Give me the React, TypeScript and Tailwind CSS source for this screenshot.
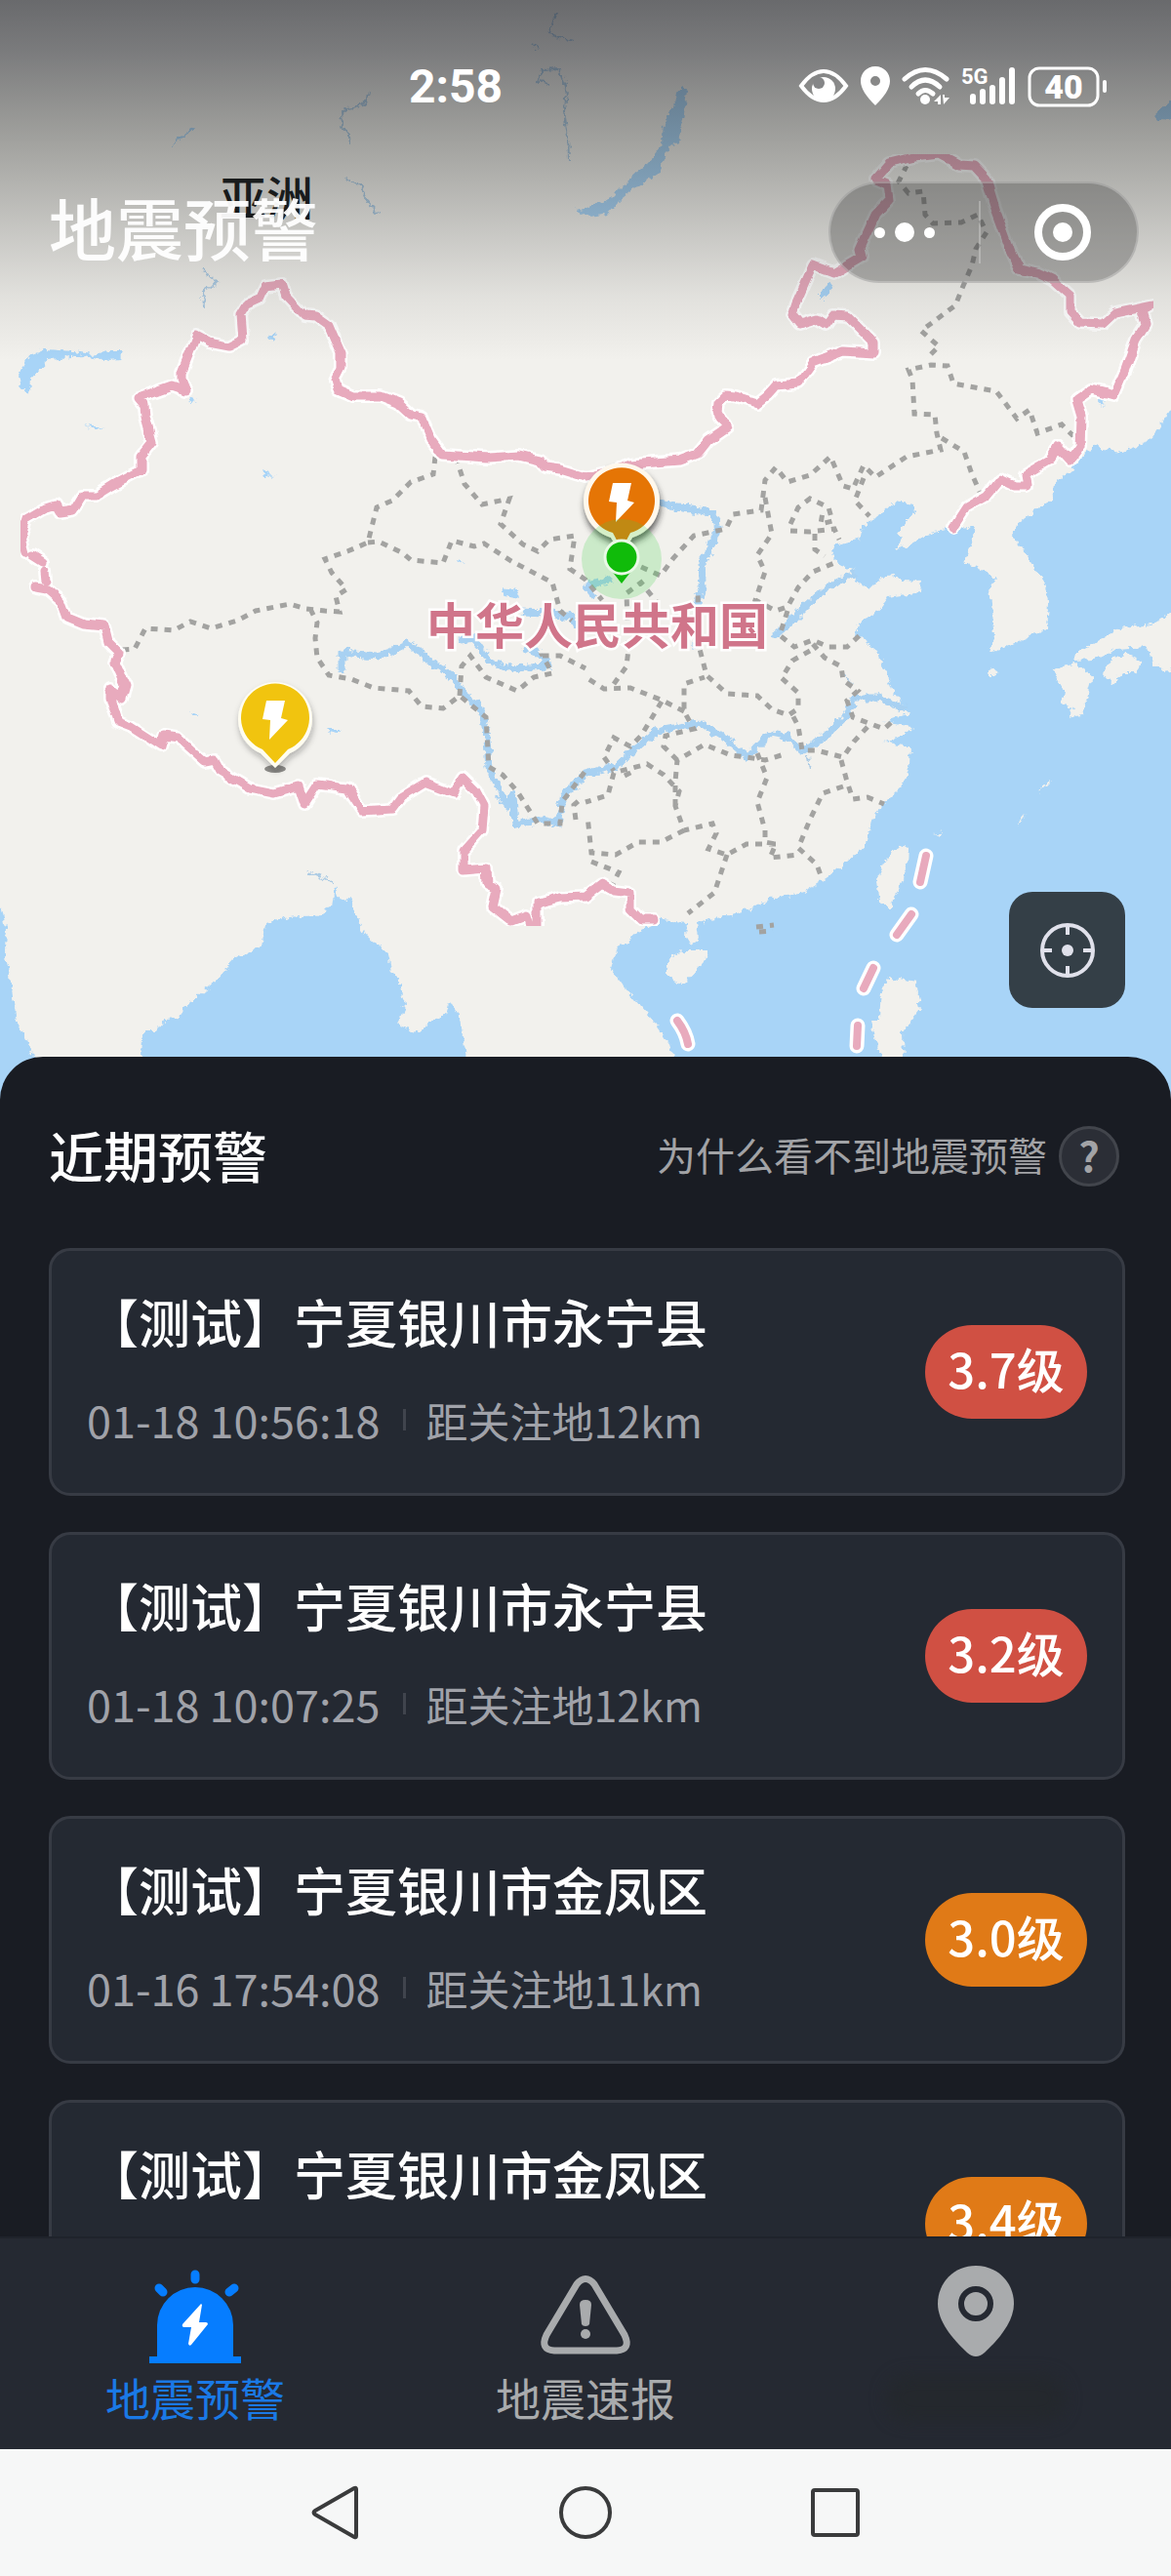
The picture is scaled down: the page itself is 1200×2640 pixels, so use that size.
import { useState } from 'react';

type Alert = {
  id: number;
  place: string;
  time: string;
  distance: string;
  level: string;
  severe: boolean;
};

const ALERTS: Alert[] = [
  { id: 1, place: '【测试】宁夏银川市永宁县', time: '01-18 10:56:18', distance: '距关注地12km', level: '3.7级', severe: true },
  { id: 2, place: '【测试】宁夏银川市永宁县', time: '01-18 10:07:25', distance: '距关注地12km', level: '3.2级', severe: true },
  { id: 3, place: '【测试】宁夏银川市金凤区', time: '01-16 17:54:08', distance: '距关注地11km', level: '3.0级', severe: false },
  { id: 4, place: '【测试】宁夏银川市金凤区', time: '01-16 17:49:31', distance: '距关注地11km', level: '3.4级', severe: false },
];

const SEA = [
  'M1200 420L1182 448L1166 457L1151 463L1130 460L1124 455L1111 465L1097 482L1080 496L1078 513L1065 520L1040 540L1036 547L1052 569L1069 594L1075 619L1073 644L1052 654L1015 669L1019 651L1013 604L1021 594L1006 583L987 576L994 561L998 540L975 541L950 548L934 557L920 563L924 552L919 546L937 525L937 516L918 513L904 526L885 540L882 552L865 556L855 560L852 570L862 580L876 583L877 596L890 604L900 594L912 588L925 595L945 596L942 607L911 612L902 624L880 640L878 652L899 667L907 687L914 706L932 731L906 740L935 745L923 756L905 760L933 765L932 783L925 805L906 824L893 842L888 865L867 884L848 899L823 915L793 920L775 929L750 937L727 943L714 946L716 962L708 968L703 960L704 945L675 943L655 953L646 960L644 967L631 973L626 993L642 1015L671 1048L686 1070L690 1085L690 1150L1220 1150L1220 420Z',
  'M144 1150L144 1083L145 1065L149 1056L161 1056L168 1045L184 1044L188 1033L222 1004L241 983L268 969L273 947L295 940L325 938L340 930L343 908L348 924L360 919L367 944L375 958L398 979L402 997L409 1004L415 1029L409 1051L429 1058L446 1044L457 1040L461 1026L471 1044L478 1083L480 1150Z',
  'M-20 928L2 930L6 950L5 976L10 1001L17 1047L35 1083L60 1150L-20 1150Z',
];

const ISLANDS = [
  'M925 866L931 870L930 885L925 904L915 922L911 933L900 919L898 901L906 884L914 872Z',
  'M726 974L722 986L701 1008L690 1006L682 997L686 981L703 974Z',
  'M910 1001L939 1006L943 1033L925 1058L928 1150L906 1100L893 1047L902 1044L904 1015Z',
  'M1220 629L1200 629L1185 638L1147 644L1120 660L1103 669L1101 677L1120 676L1143 665L1176 663L1182 679L1193 688L1220 683Z',
  'M1101 679L1120 694L1115 712L1109 733L1094 736L1100 726L1088 722L1090 708L1086 701L1078 686Z',
  'M1130 690L1140 675L1155 670L1172 678L1163 690L1150 690L1140 702Z',
  'M1012 689L1019 686L1025 689L1019 693L1013 693Z',
  'M1064 813L1072 802L1078 800L1068 810Z',
  'M1041 845L1052 833L1046 842Z',
  'M958 855L966 853L962 856Z',
];

const LAKES = [
  'M699 88L704 91L701 117L694 146L686 150L673 179L650 193L633 207L623 219L604 222L589 215L604 212L623 205L642 186L663 169L678 148L680 127Z',
  'M19 386L29 365L46 358L76 360L95 363L112 360L126 360L124 368L107 369L85 365L50 368L31 389L30 405L22 396Z',
  'M1220 103L1200 103L1183 117L1188 123L1220 125Z',
  'M850 290L854 291L846 305L840 307L840 300Z',
  'M1123 409L1133 410L1130 417Z',
  'M275 344L284 340L280 350Z',
  'M192 407L202 411L196 413Z',
  'M87 436L108 438L98 440Z',
  'M268 482L281 488L270 487Z',
  'M514 603L530 606L532 614L518 611Z',
  'M335 747L350 747L340 752Z',
  'M174 149L199 130L198 134L182 146Z',
  'M196 730L204 733L199 733Z',
  'M468 574L477 576L471 578Z',
];

const RIVERS = [
  'M350 690L350 669L387 672L400 668L417 660L428 665L440 677L465 694L475 711L490 722L498 745L501 786L519 826L526 815L528 845L555 840L572 844L578 815L600 793L631 786L650 768L677 747L719 742L742 756L765 776L780 760L791 751L805 754L822 770L845 755L868 733L876 715L898 715L929 727',
  'M471 656L486 654L501 677L520 685L563 683L552 670L536 663',
  'M534 627L562 628L586 632L592 645',
  'M600 600L610 612M600 600L628 594',
  'M677 515L695 520L730 525L736 540L728 562L719 576L720 595L715 619L715 665',
  'M791 654L807 640L825 622L845 604L877 586',
];

const THIN_RIVERS = [
  'M377 95L373 107L349 115L350 128L357 138L358 150',
  'M570 12L563 35L587 42M545 45L552 50M562 85L550 82L555 72L574 71L580 88L578 115L582 140L583 165',
  'M352 182L370 192L378 208L388 219',
  'M208 278L222 290L208 300L209 315',
  'M315 893L340 904M828 775L830 790M865 690L872 700',
];

const BORDER = [
  'M25 567L21 552L27 532L44 522L57 518L61 525L75 523L84 508L99 508L115 498L145 482L145 467L156 453L149 427L148 415L142 408L176 396L191 401L186 389L186 382L201 344L214 351L235 355L249 348L247 322L253 312L266 306L272 293L289 291L293 303L312 323L323 324L337 334L349 362L349 377L343 389L346 399L362 406L390 406L408 413L421 425L432 427L442 451L453 466L501 469L532 467L553 472L559 479L574 481L600 489L625 483L646 476L696 472L715 465L726 451L745 438L735 422L736 412L743 405L754 406L776 413L786 405L795 395L818 393L833 372L864 360L895 362L895 351L868 324L854 323L847 333L837 327L820 332L812 322L816 310L833 272L854 280L883 263L881 255L897 220L911 205L909 189L897 184L912 167L937 161L962 158L983 169L998 170L1011 184L1021 217L1036 258L1044 275L1063 279L1078 286L1097 303L1097 320L1107 331L1130 332L1143 320L1182 312L1170 319L1174 332L1164 348L1153 379L1142 405L1119 399L1103 410L1108 427L1107 458L1097 472L1084 458L1076 472L1050 487L1052 498L1040 498L1025 491L1011 508L990 520L977 540',
  'M33 569L44 576',
  'M46 585L47 595',
  'M37 602L48 604L63 617L69 633L86 640L107 642L111 658L122 669L118 679L128 701L124 715L113 706L113 715L121 740L134 745L165 765L168 754L182 756L210 781L220 779L226 790L256 808L281 813L306 806L312 824L325 804L356 808L371 831L402 829L411 817L436 802L465 813L474 797L488 811L496 826L494 851L475 872L475 892L498 890L499 906L509 911L505 929L524 944L540 938L543 949L551 949L551 926L574 920L600 919L617 906L629 913L646 915L646 931L657 942L671 942',
];

const SEA_DASHES = [
  'M949 877L943 904',
  'M934 937L919 958',
  'M895 992L885 1013',
  'M879 1051L878 1072',
  'M694 1046Q703 1058 705 1070',
];

const PROVINCES = [
  'M446 468L444 486L421 494L402 513L386 520L381 540L377 556L356 565L333 573L340 587L355 604L344 611L348 627L333 626L314 624L297 619L262 626L243 636L216 644L195 637L178 646L149 644L138 665L124 666',
  'M318 624L325 638L323 654L325 674L337 692L360 696L383 705L419 708L432 724L454 726L471 713L498 735L501 786L515 794L530 811L551 844L574 844L576 822L600 790',
  'M377 556L388 555L413 567L421 574L454 577L463 554L486 560L496 557L524 575L566 597L574 626L586 636',
  'M467 468L476 496L494 517L522 511L513 537L536 558L551 565L563 553L589 549L584 583L600 594L617 615',
  'M657 581L677 590L690 572L711 549L744 542L751 527L780 523L784 492L795 479L807 494L830 487L851 468L864 498L874 501L885 477L897 489L929 468L964 461L960 444L958 425L937 424L935 389L931 379L954 374L971 375L977 393L1021 401L1042 429L1055 420L1063 444L1088 435L1101 448',
  'M954 363L962 355L944 339L979 313L987 293L996 272L1000 255L1011 238L1002 220L985 228L956 229L948 220L946 196L931 198L921 186L929 170',
  'M965 449L988 463L996 486L1004 504',
  'M885 490L876 513L891 529',
  'M810 537L818 520L830 511L849 520L853 534L841 537L843 525',
  'M810 544L830 545L855 542L860 553M835 547L835 563L845 570',
  'M784 510L789 537L791 547L776 569L784 586L774 615L795 626L807 622L818 602L833 586L855 577',
  'M807 626L799 651L814 663L833 656L849 663L868 663L881 651',
  'M830 667L812 677L801 695L818 710L818 726L808 733L791 727L776 713L745 711L724 692L717 665L715 608',
  'M833 660L845 674L862 683L864 697L879 708L868 718L874 735L906 747L918 736',
  'M889 745L875 760L864 776L837 769L822 769L818 744L810 729',
  'M862 779L868 801L874 819L889 817L906 824',
  'M864 806L843 813L830 840L818 869L837 886L841 897',
  'M776 772L786 797L776 822L784 851L784 863L795 865L789 879L818 876',
  'M795 865L765 865L745 876L726 870L734 854L730 844L701 851L692 826L696 811L680 794L663 783L629 792L623 815L600 822',
  'M701 851L677 863L654 863L631 876L606 874L602 836M606 883L634 894L627 908',
  'M745 876L732 915L705 936',
  'M692 826L692 801L694 779L722 763L749 774L765 776L784 779L807 772',
  'M694 779L680 765L682 754L711 747L701 729L701 701L722 694',
  'M701 729L677 717L646 705L619 706L600 694M629 701L642 683L644 665L642 608L657 597L673 617',
  'M678 719L657 754L646 765L629 756L619 776L629 790M590 840L588 825L596 818M640 795L650 790',
  'M471 713L473 683L482 672L498 694L530 708L547 694L566 690L556 672L574 672L600 685',
  'M775 950L793 948M778 955L792 954',
];

const BOLT = 'M-9 -18H10L6 0L13 2L-6 22L-5 2L-13 1Z';

function ChinaMap() {
  return (
    <svg viewBox="0 0 1200 1130" className="block w-full bg-[#f2f1ed]" role="img" aria-label="地震预警地图">
      <defs>
        <filter id="coast" x="0" y="0" width="100%" height="100%">
          <feTurbulence type="fractalNoise" baseFrequency="0.15" numOctaves="3" seed="4" />
          <feDisplacementMap in="SourceGraphic" scale="9" xChannelSelector="R" yChannelSelector="G" />
        </filter>
        <filter id="wobble" x="0" y="0" width="100%" height="100%">
          <feTurbulence type="fractalNoise" baseFrequency="0.07" numOctaves="1" seed="7" />
          <feDisplacementMap in="SourceGraphic" scale="8" xChannelSelector="R" yChannelSelector="G" />
        </filter>
        <filter id="pinShadow" x="-30%" y="-30%" width="160%" height="160%">
          <feDropShadow dx="1" dy="5" stdDeviation="3" floodColor="#222" floodOpacity="0.7" />
        </filter>
        <filter id="pinShadowSoft" x="-30%" y="-30%" width="160%" height="160%">
          <feDropShadow dx="1" dy="4" stdDeviation="3" floodColor="#222" floodOpacity="0.3" />
        </filter>
        <linearGradient id="topShade" x1="0" y1="0" x2="0" y2="1">
          <stop offset="0" stopColor="#1c1e24" stopOpacity="0.64" />
          <stop offset="0.14" stopColor="#1c1e24" stopOpacity="0.56" />
          <stop offset="0.4" stopColor="#222422" stopOpacity="0.38" />
          <stop offset="0.62" stopColor="#222422" stopOpacity="0.22" />
          <stop offset="0.82" stopColor="#222422" stopOpacity="0.08" />
          <stop offset="1" stopColor="#222422" stopOpacity="0" />
        </linearGradient>
      </defs>

      <g filter="url(#coast)">
        <rect x="-20" width="1240" height="1130" fill="#f2f1ed" />
        <path d={SEA.join('')} fill="#a8d4f7" />
        <path d={ISLANDS.join('')} fill="#f2f1ed" />
        <path d={LAKES.join('')} fill="#a8d4f7" />
        <path d={RIVERS.join('')} fill="none" stroke="#a8d1f2" strokeWidth="7" strokeLinejoin="round" />
        <path d={THIN_RIVERS.join('')} fill="none" stroke="#8fbbe0" strokeWidth="2" strokeOpacity="0.7" />
      </g>

      <path d={PROVINCES.join('')} fill="none" stroke="#a3a3a1" strokeWidth="5" strokeDasharray="7 7" />
      <g fill="none" strokeLinecap="round" strokeLinejoin="round">
        <g filter="url(#wobble)">
          <path d={BORDER.join('')} stroke="#fff" strokeWidth="14" />
          <path d={BORDER.join('')} stroke="#e8aabd" strokeWidth="9" />
        </g>
        <path d={SEA_DASHES.join('')} stroke="#fff" strokeWidth="15" />
        <path d={SEA_DASHES.join('')} stroke="#e8aabd" strokeWidth="8" />
      </g>

      <g fontFamily="'Noto Sans CJK SC', sans-serif" textAnchor="middle">
        <text x="273" y="221" fontSize="48" fontWeight="500" fill="#15181a">亚洲</text>
        <text x="612" y="660" fontSize="50" fontWeight="700" fill="#d0758a" stroke="#fff" strokeWidth="5" paintOrder="stroke">
          中华人民共和国
        </text>
      </g>

      <rect width="1200" height="370" fill="url(#topShade)" />

      <g transform="translate(637 513)">
        <path d="M0 56L-11 38A39 39 0 1 1 11 38Z" fill="#fff8ec" filter="url(#pinShadow)" />
        <path d="M0 50L-9 33A34 34 0 1 1 9 33Z" fill="#e57505" />
        <path d={BOLT} fill="#fff" />
      </g>
      <circle cx="637" cy="573" r="41" fill="#3fd04a" fillOpacity="0.22" />
      <path d="M626 584H648L637 598Z" fill="#10bb0a" />
      <circle cx="637" cy="571" r="17" fill="#10bb0a" stroke="#e9f9e6" strokeWidth="3" />

      <g transform="translate(282 736)">
        <ellipse cx="0" cy="52" rx="11" ry="4" fill="#8b8a87" />
        <path d="M0 51L-15 36A38 38 0 1 1 15 36Z" fill="#fffdf0" filter="url(#pinShadowSoft)" />
        <path d="M0 46L-13 32A35 35 0 1 1 13 32Z" fill="#f1c40f" />
        <path d={BOLT} fill="#fff" />
      </g>
    </svg>
  );
}

function StatusIcons() {
  return (
    <svg viewBox="0 0 320 44" className="h-[44px] w-[320px]" fill="#fff" stroke="none" aria-label="5G 40%">
      <path d="M3 21Q14 6 26 6Q38 6 49 21Q38 36 26 36Q14 36 3 21Z" fill="none" stroke="#fff" strokeWidth="4" />
      <circle cx="26" cy="24" r="12" />
      <circle cx="21" cy="18" r="6" fill="#858687" />
      <path d="M79 1C70 1 64 8 64 16C64 24 70 32 79 41C88 32 94 24 94 16C94 8 88 1 79 1ZM79 11A5 5 0 1 1 79 21A5 5 0 1 1 79 11Z" fillRule="evenodd" />
      <g fill="none" stroke="#fff" strokeWidth="5" strokeLinecap="round">
        <path d="M109 14Q130 -5 152 14" />
        <path d="M116 22Q130 8 145 22" />
        <path d="M123 29Q130 22 138 29" />
      </g>
      <circle cx="130" cy="35" r="5" />
      <path d="M139 37L146 30V40H143V37ZM148 30L150 30V33H155L149 40Z" />
      <text x="167" y="19" fontSize="22" fontWeight="700" fontFamily="Roboto, sans-serif">5G</text>
      <g stroke="#fff" strokeWidth="6" strokeLinecap="round">
        <path d="M179 32V37M189 27V37M199 23V37M209 15V37M219 5V37" />
      </g>
      <rect x="237" y="3" width="70" height="38" rx="10" fill="none" stroke="#fff" strokeWidth="3" />
      <rect x="312" y="15" width="4" height="13" rx="2" />
      <text x="272" y="34" fontSize="34" fontWeight="900" fontFamily="Roboto, sans-serif" textAnchor="middle">40</text>
    </svg>
  );
}

function AlarmIcon() {
  return (
    <svg viewBox="0 0 96 96" className="size-24">
      <path d="M9 89V57A39 39 0 0 1 87 57V89H95V96H1V89Z" fill="#067dff" />
      <path d="M48 5V10M11 19L15 23M88 19L83 23" stroke="#067dff" strokeWidth="9" strokeLinecap="round" />
      <path d="M54 35L35 56Q34 59 37 59H44L41 76Q42 79 44 77L61 56Q61 54 59 54H52L55 36Z" fill="#fff" />
    </svg>
  );
}

function WarningIcon() {
  return (
    <svg viewBox="0 0 96 96" className="size-24" fill="#a9abad">
      <path d="M39 15Q48 4 57 15L88 67Q95 82 80 83H16Q1 82 8 67Z" fill="none" stroke="#a9abad" strokeWidth="7" />
      <path d="M42 36Q42 31 48 31Q54 31 54 36L52 56Q51 58 48 58Q45 58 44 56Z" />
      <circle cx="48" cy="66" r="5" />
    </svg>
  );
}

function PinIcon() {
  return (
    <svg viewBox="0 0 96 96" className="size-24">
      <path d="M48 0C26 0 9 17 9 39C9 57 24 75 39 89Q48 97 57 89C72 75 87 57 87 39C87 17 70 0 48 0Z" fill="#a9abad" />
      <circle cx="48" cy="39" r="15" fill="none" stroke="#252932" strokeWidth="6" />
    </svg>
  );
}

function AlertCard({ alert }: { alert: Alert }) {
  return (
    <li className="flex shrink-0 items-center justify-between rounded-[22px] border-[3px] border-[#373b44] bg-[#242932] pb-[42px] pl-[36px] pr-[36px] pt-[34px]">
      <div>
        <h3 className="text-[53px] font-medium leading-[76px] text-white">{alert.place}</h3>
        <p className="mt-[30px] flex items-center text-[43px] leading-[66px] text-[#a0a2a9]">
          <span className="text-[45px]">{alert.time}</span>
          <span className="ml-6 mr-5 h-[22px] w-[3px] bg-[#40444d]" />
          <span>{alert.distance}</span>
        </p>
      </div>
      <span
        className={`mt-2 flex h-24 w-[166px] items-center justify-center rounded-full pb-2 text-[49px] font-medium text-white ${
          alert.severe ? 'bg-[#d05043]' : 'bg-[#e07a17]'
        }`}
      >
        {alert.level}
      </span>
    </li>
  );
}

export default function App() {
  const [tab, setTab] = useState('alert');

  return (
    <div className="flex h-screen flex-col overflow-hidden bg-[#191c23] font-['Noto_Sans_CJK_SC',sans-serif]">
      <main className="flex min-h-0 flex-1 flex-col overflow-hidden">
        <section className="relative shrink-0">
          <ChinaMap />

          <header className="absolute inset-x-0 top-0 pt-[67px]">
            <div className="flex h-[44px] items-center justify-between pl-[419px] pr-[62px]">
              <span className="font-['Roboto',sans-serif] text-[48px] font-bold text-white">2:58</span>
              <StatusIcons />
            </div>
            <div className="mt-[75px] flex h-[104px] items-center justify-between pl-[50px] pr-[33px]">
              <h1 className="pb-3 text-[69px] font-medium leading-none text-white/95">地震预警</h1>
              <div className="flex h-full w-[318px] items-center rounded-full border-2 border-white/25 bg-[#3c3c3c]/35">
                <button aria-label="更多" className="flex h-full flex-1 items-center justify-center gap-[10px]">
                  <span className="size-[11px] rounded-full bg-white" />
                  <span className="size-5 rounded-full bg-white" />
                  <span className="size-[11px] rounded-full bg-white" />
                </button>
                <span className="h-16 w-[2px] bg-white/25" />
                <button aria-label="关闭" className="flex h-full flex-1 items-center justify-center pl-2">
                  <span className="flex size-[58px] items-center justify-center rounded-full border-8 border-white">
                    <span className="size-5 rounded-full bg-white" />
                  </span>
                </button>
              </div>
            </div>
          </header>

          <button
            aria-label="定位"
            className="absolute bottom-[97px] right-[47px] flex size-[119px] items-center justify-center rounded-3xl bg-[#343f47]"
          >
            <svg viewBox="0 0 60 60" className="size-[60px]" fill="none" stroke="#e0e1eb" strokeWidth="4">
              <circle cx="30" cy="30" r="26" />
              <path d="M30 4V14M30 46V56M4 30H14M46 30H56" />
              <circle cx="30" cy="30" r="6" fill="#e0e1eb" stroke="none" />
            </svg>
          </button>
        </section>

        <section className="relative -mt-[47px] flex min-h-0 flex-1 flex-col rounded-t-[44px] bg-[#191c23] pl-[50px] pr-[47px]">
          <div className="flex shrink-0 items-center justify-between pb-[56px] pr-[6px] pt-[60px]">
            <h2 className="text-[56px] font-medium leading-[80px] text-white">近期预警</h2>
            <button className="flex items-center gap-3 text-[40px] leading-[60px] text-[#a2a3a6]">
              为什么看不到地震预警
              <span className="mt-1 flex size-[62px] items-center justify-center rounded-full border-[3px] border-[#42454c] bg-[#2b2e36] pb-1 text-[42px] font-bold">
                ?
              </span>
            </button>
          </div>
          <ul className="flex min-h-0 flex-1 flex-col gap-[37px] overflow-y-auto [scrollbar-width:none]">
            {ALERTS.map((alert) => (
              <AlertCard key={alert.id} alert={alert} />
            ))}
          </ul>
        </section>
      </main>

      <nav className="grid shrink-0 grid-cols-3 border-t-2 border-[#1f232b] bg-[#252932] text-[46px] leading-[60px]">
        <button onClick={() => setTab('alert')} aria-pressed={tab === 'alert'} className="flex flex-col items-center gap-1 pb-6 pt-[32px] text-[#1a79e6]">
          <AlarmIcon />
          地震预警
        </button>
        <button onClick={() => setTab('report')} aria-pressed={tab === 'report'} className="flex flex-col items-center gap-1 pb-6 pt-[32px] text-[#a9abad]">
          <WarningIcon />
          地震速报
        </button>
        <button onClick={() => setTab('place')} aria-pressed={tab === 'place'} aria-label="位置" className="flex flex-col items-center gap-4 pb-4 pt-[28px]">
          <PinIcon />
          <span className="h-12 w-[184px] rounded-full bg-[#24282d] blur-sm" />
        </button>
      </nav>

      <footer className="flex h-[130px] shrink-0 items-center justify-center gap-[196px] bg-[#f6f7f7]">
        <button aria-label="返回">
          <svg viewBox="0 0 60 60" className="size-[60px]" fill="none" stroke="#3a3b3c" strokeWidth="4" strokeLinejoin="round">
            <path d="M51 6V54Q51 56 49 55L9 32Q6 30 9 28L49 5Q51 4 51 6Z" />
          </svg>
        </button>
        <button aria-label="主页">
          <svg viewBox="0 0 60 60" className="size-[60px]" fill="none" stroke="#3a3b3c" strokeWidth="4">
            <circle cx="30" cy="30" r="25" />
          </svg>
        </button>
        <button aria-label="最近任务">
          <svg viewBox="0 0 60 60" className="size-[60px]" fill="none" stroke="#3a3b3c" strokeWidth="4">
            <rect x="7" y="7" width="46" height="46" rx="2" />
          </svg>
        </button>
      </footer>
    </div>
  );
}
